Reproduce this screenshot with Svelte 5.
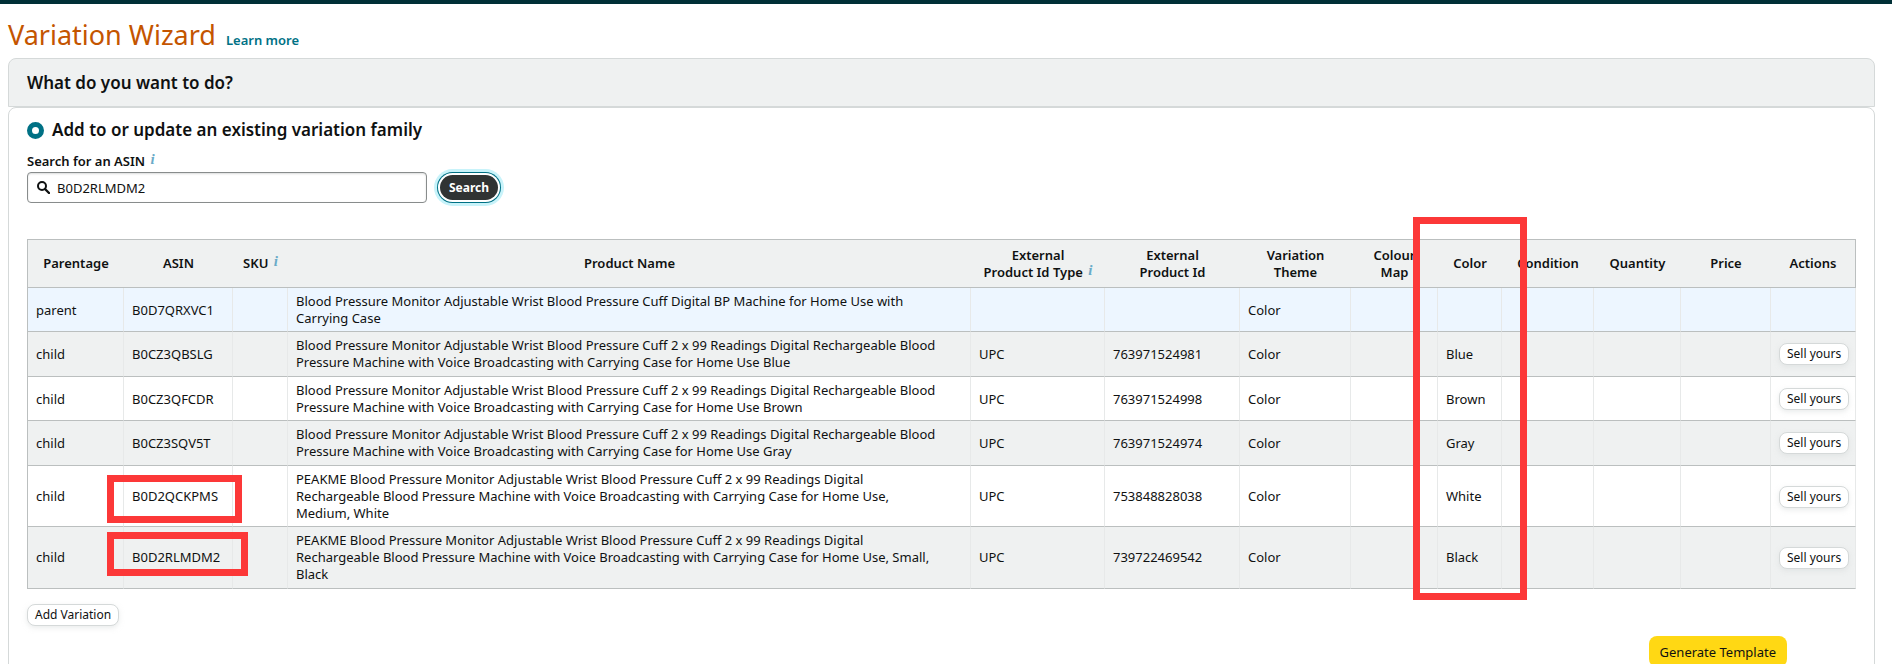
<script lang="ts">
  interface Row {
    parentage: string;
    asin: string;
    name: string;
    idType: string;
    externalId: string;
    theme: string;
    color: string;
  }

  let asin = $state('B0D2RLMDM2');
  let action = $state('update');

  const rows: Row[] = [
    {
      parentage: 'parent',
      asin: 'B0D7QRXVC1',
      name: 'Blood Pressure Monitor Adjustable Wrist Blood Pressure Cuff Digital BP Machine for Home Use with Carrying Case',
      idType: '',
      externalId: '',
      theme: 'Color',
      color: '',
    },
    {
      parentage: 'child',
      asin: 'B0CZ3QBSLG',
      name: 'Blood Pressure Monitor Adjustable Wrist Blood Pressure Cuff 2 x 99 Readings Digital Rechargeable Blood Pressure Machine with Voice Broadcasting with Carrying Case for Home Use Blue',
      idType: 'UPC',
      externalId: '763971524981',
      theme: 'Color',
      color: 'Blue',
    },
    {
      parentage: 'child',
      asin: 'B0CZ3QFCDR',
      name: 'Blood Pressure Monitor Adjustable Wrist Blood Pressure Cuff 2 x 99 Readings Digital Rechargeable Blood Pressure Machine with Voice Broadcasting with Carrying Case for Home Use Brown',
      idType: 'UPC',
      externalId: '763971524998',
      theme: 'Color',
      color: 'Brown',
    },
    {
      parentage: 'child',
      asin: 'B0CZ3SQV5T',
      name: 'Blood Pressure Monitor Adjustable Wrist Blood Pressure Cuff 2 x 99 Readings Digital Rechargeable Blood Pressure Machine with Voice Broadcasting with Carrying Case for Home Use Gray',
      idType: 'UPC',
      externalId: '763971524974',
      theme: 'Color',
      color: 'Gray',
    },
    {
      parentage: 'child',
      asin: 'B0D2QCKPMS',
      name: 'PEAKME Blood Pressure Monitor Adjustable Wrist Blood Pressure Cuff 2 x 99 Readings Digital Rechargeable Blood Pressure Machine with Voice Broadcasting with Carrying Case for Home Use, Medium, White',
      idType: 'UPC',
      externalId: '753848828038',
      theme: 'Color',
      color: 'White',
    },
    {
      parentage: 'child',
      asin: 'B0D2RLMDM2',
      name: 'PEAKME Blood Pressure Monitor Adjustable Wrist Blood Pressure Cuff 2 x 99 Readings Digital Rechargeable Blood Pressure Machine with Voice Broadcasting with Carrying Case for Home Use, Small, Black',
      idType: 'UPC',
      externalId: '739722469542',
      theme: 'Color',
      color: 'Black',
    },
  ];
</script>

<div class="page">
  <header class="title">
    <h1>Variation Wizard</h1>
    <a href="/learn-more">Learn more</a>
  </header>

  <main>
    <h2 class="box-head">What do you want to do?</h2>

    <section class="box">
      <label class="option">
        <input type="radio" name="action" value="update" bind:group={action} />
        Add to or update an existing variation family
      </label>

      <form class="search" onsubmit={(e) => e.preventDefault()}>
        <label for="asin">Search for an ASIN <i class="info">i</i></label>
        <div class="search-row">
          <div class="field">
            <svg viewBox="0 0 13 13" width="13" height="13" aria-hidden="true">
              <circle cx="5" cy="5" r="4" fill="none" stroke="#0f1111" stroke-width="2" />
              <path d="M8 8l4 4" stroke="#0f1111" stroke-width="2.4" stroke-linecap="round" />
            </svg>
            <input id="asin" type="text" bind:value={asin} />
          </div>
          <button class="dark" type="submit">Search</button>
        </div>
      </form>

      <div class="table-wrap">
        <table>
          <colgroup>
            <col class="w-parentage" />
            <col class="w-asin" />
            <col class="w-sku" />
            <col />
            <col class="w-type" />
            <col class="w-external" />
            <col class="w-theme" />
            <col class="w-map" />
            <col class="w-color" />
            <col class="w-condition" />
            <col class="w-map" />
            <col class="w-price" />
            <col class="w-actions" />
          </colgroup>
          <thead>
            <tr>
              <th>Parentage</th>
              <th>ASIN</th>
              <th>SKU <i class="info">i</i></th>
              <th>Product Name</th>
              <th>External<br />Product Id Type <i class="info">i</i></th>
              <th>External<br />Product Id</th>
              <th>Variation<br />Theme</th>
              <th>Colour<br />Map</th>
              <th>Color</th>
              <th>Condition</th>
              <th>Quantity</th>
              <th>Price</th>
              <th>Actions</th>
            </tr>
          </thead>
          <tbody>
            {#each rows as row (row.asin)}
              <tr class:parent={row.parentage === 'parent'}>
                <td>{row.parentage}</td>
                <td>{row.asin}</td>
                <td></td>
                <td class="name">{row.name}</td>
                <td>{row.idType}</td>
                <td>{row.externalId}</td>
                <td>{row.theme}</td>
                <td></td>
                <td>{row.color}</td>
                <td></td>
                <td></td>
                <td></td>
                <td>
                  {#if row.parentage === 'child'}
                    <button class="small" type="button">Sell yours</button>
                  {/if}
                </td>
              </tr>
            {/each}
          </tbody>
        </table>
        <div class="mark mark-color"></div>
        <div class="mark mark-white"></div>
        <div class="mark mark-black"></div>
      </div>

      <button class="small" type="button">Add Variation</button>

      <div class="footer">
        <button class="primary" type="button">Generate Template</button>
      </div>
    </section>
  </main>
</div>

<style>
  :global(body) {
    background: #fff;
  }
  .page {
    box-sizing: border-box;
    height: 100vh;
    overflow: hidden;
    border-top: 4px solid #002f36;
    font-family: 'Noto Sans', 'Open Sans', sans-serif;
    font-size: 13px;
    line-height: 17px;
    color: #0f1111;
  }
  button,
  input {
    font-family: inherit;
    color: inherit;
  }
  .title {
    display: flex;
    align-items: baseline;
    gap: 10px;
    padding: 13px 8px 5px;
  }
  h1 {
    margin: 0;
    font-size: 27px;
    font-weight: 400;
    line-height: 36px;
    color: #c45500;
  }
  .title a {
    font-weight: 600;
    color: #007185;
    text-decoration: none;
  }
  main {
    margin: 0 17px 0 8px;
  }
  .box-head {
    margin: 0;
    padding: 12px 18px;
    border: 1px solid #d5d9d9;
    border-radius: 8px 8px 0 0;
    background: #eff1f1;
    font-size: 17px;
    font-weight: 600;
    line-height: 23px;
  }
  .box {
    min-height: 100vh;
    padding: 10px 18px;
    border: 1px solid #d5d9d9;
    border-radius: 8px 8px 0 0;
  }
  .option {
    display: flex;
    align-items: center;
    gap: 8px;
    font-size: 17px;
    font-weight: 600;
    line-height: 24px;
  }
  .option input {
    appearance: none;
    box-sizing: border-box;
    width: 17px;
    height: 17px;
    margin: 0;
    border: 5px solid #007185;
    border-radius: 50%;
    background: #fff;
  }
  .search {
    display: grid;
    gap: 2px;
    padding-top: 11px;
    font-weight: 600;
  }
  .info {
    margin-left: 2px;
    font: italic bold 15px/0 'Liberation Serif', serif;
    color: #6aabc8;
    vertical-align: 2px;
  }
  .search-row {
    display: flex;
    align-items: center;
    gap: 13px;
  }
  .field {
    box-sizing: border-box;
    display: flex;
    align-items: center;
    gap: 7px;
    width: 400px;
    height: 31px;
    padding: 0 9px;
    border: 1px solid #888c8c;
    border-radius: 4px;
    box-shadow: inset 0 1px 2px rgba(15, 17, 17, 0.15);
  }
  .field input {
    flex: 1;
    min-width: 0;
    padding: 0;
    border: 0;
    outline: 0;
    background: none;
    font-size: 13px;
  }
  .dark {
    height: 25px;
    padding: 0 9px;
    border: 0;
    border-radius: 13px;
    background: #303333;
    box-shadow:
      0 0 0 2px #fff,
      0 0 0 3px #007185,
      0 0 0 6px #c8f3fa;
    font-size: 12px;
    font-weight: 700;
    color: #fff;
  }
  .table-wrap {
    position: relative;
    margin: 36px 0 15px;
  }
  table {
    width: 100%;
    table-layout: fixed;
    border-collapse: separate;
    border-spacing: 0;
    border-left: 1px solid #bbbfbf;
  }
  .w-parentage {
    width: 96px;
  }
  .w-asin {
    width: 109px;
  }
  .w-sku {
    width: 55px;
  }
  .w-type {
    width: 134px;
  }
  .w-external {
    width: 135px;
  }
  .w-theme {
    width: 111px;
  }
  .w-map {
    width: 87px;
  }
  .w-color {
    width: 64px;
  }
  .w-condition {
    width: 92px;
  }
  .w-price {
    width: 90px;
  }
  .w-actions {
    width: 85px;
  }
  th {
    height: 47px;
    padding: 0;
    border-top: 1px solid #bbbfbf;
    border-bottom: 1px solid #bbbfbf;
    background: #eff1f1;
    font-weight: 600;
  }
  th:last-child {
    border-right: 1px solid #bbbfbf;
  }
  td {
    padding: 5px 8px;
    border-right: 1px solid #e7e9e9;
    border-bottom: 1px solid #bbbfbf;
  }
  tbody tr:nth-child(odd) td {
    padding-bottom: 4px;
  }
  tbody tr:nth-child(even) {
    background: #eff1f1;
  }
  td.name {
    padding-right: 28px;
  }
  .parent {
    background: #edf6ff;
  }
  .small {
    height: 22px;
    padding: 0 7px;
    border: 1px solid #d5d9d9;
    border-radius: 8px;
    background: #fff;
    box-shadow: 0 2px 5px rgba(213, 217, 217, 0.5);
    font-size: 12px;
    line-height: 20px;
    white-space: nowrap;
  }
  td .small {
    display: block;
  }
  .mark {
    position: absolute;
    box-sizing: border-box;
    border: 7px solid #fc3838;
    pointer-events: none;
  }
  .mark-color {
    top: -22px;
    right: 329px;
    width: 114px;
    height: 383px;
  }
  .mark-white {
    top: 236px;
    left: 80px;
    width: 135px;
    height: 48px;
  }
  .mark-black {
    top: 293px;
    left: 80px;
    width: 141px;
    height: 44px;
  }
  .footer {
    display: flex;
    justify-content: flex-end;
    padding: 10px 69px 0 0;
  }
  .primary {
    height: 31px;
    padding: 0 11px;
    border: 0;
    border-radius: 8px;
    background: #ffd814;
    font-size: 13px;
  }
</style>
